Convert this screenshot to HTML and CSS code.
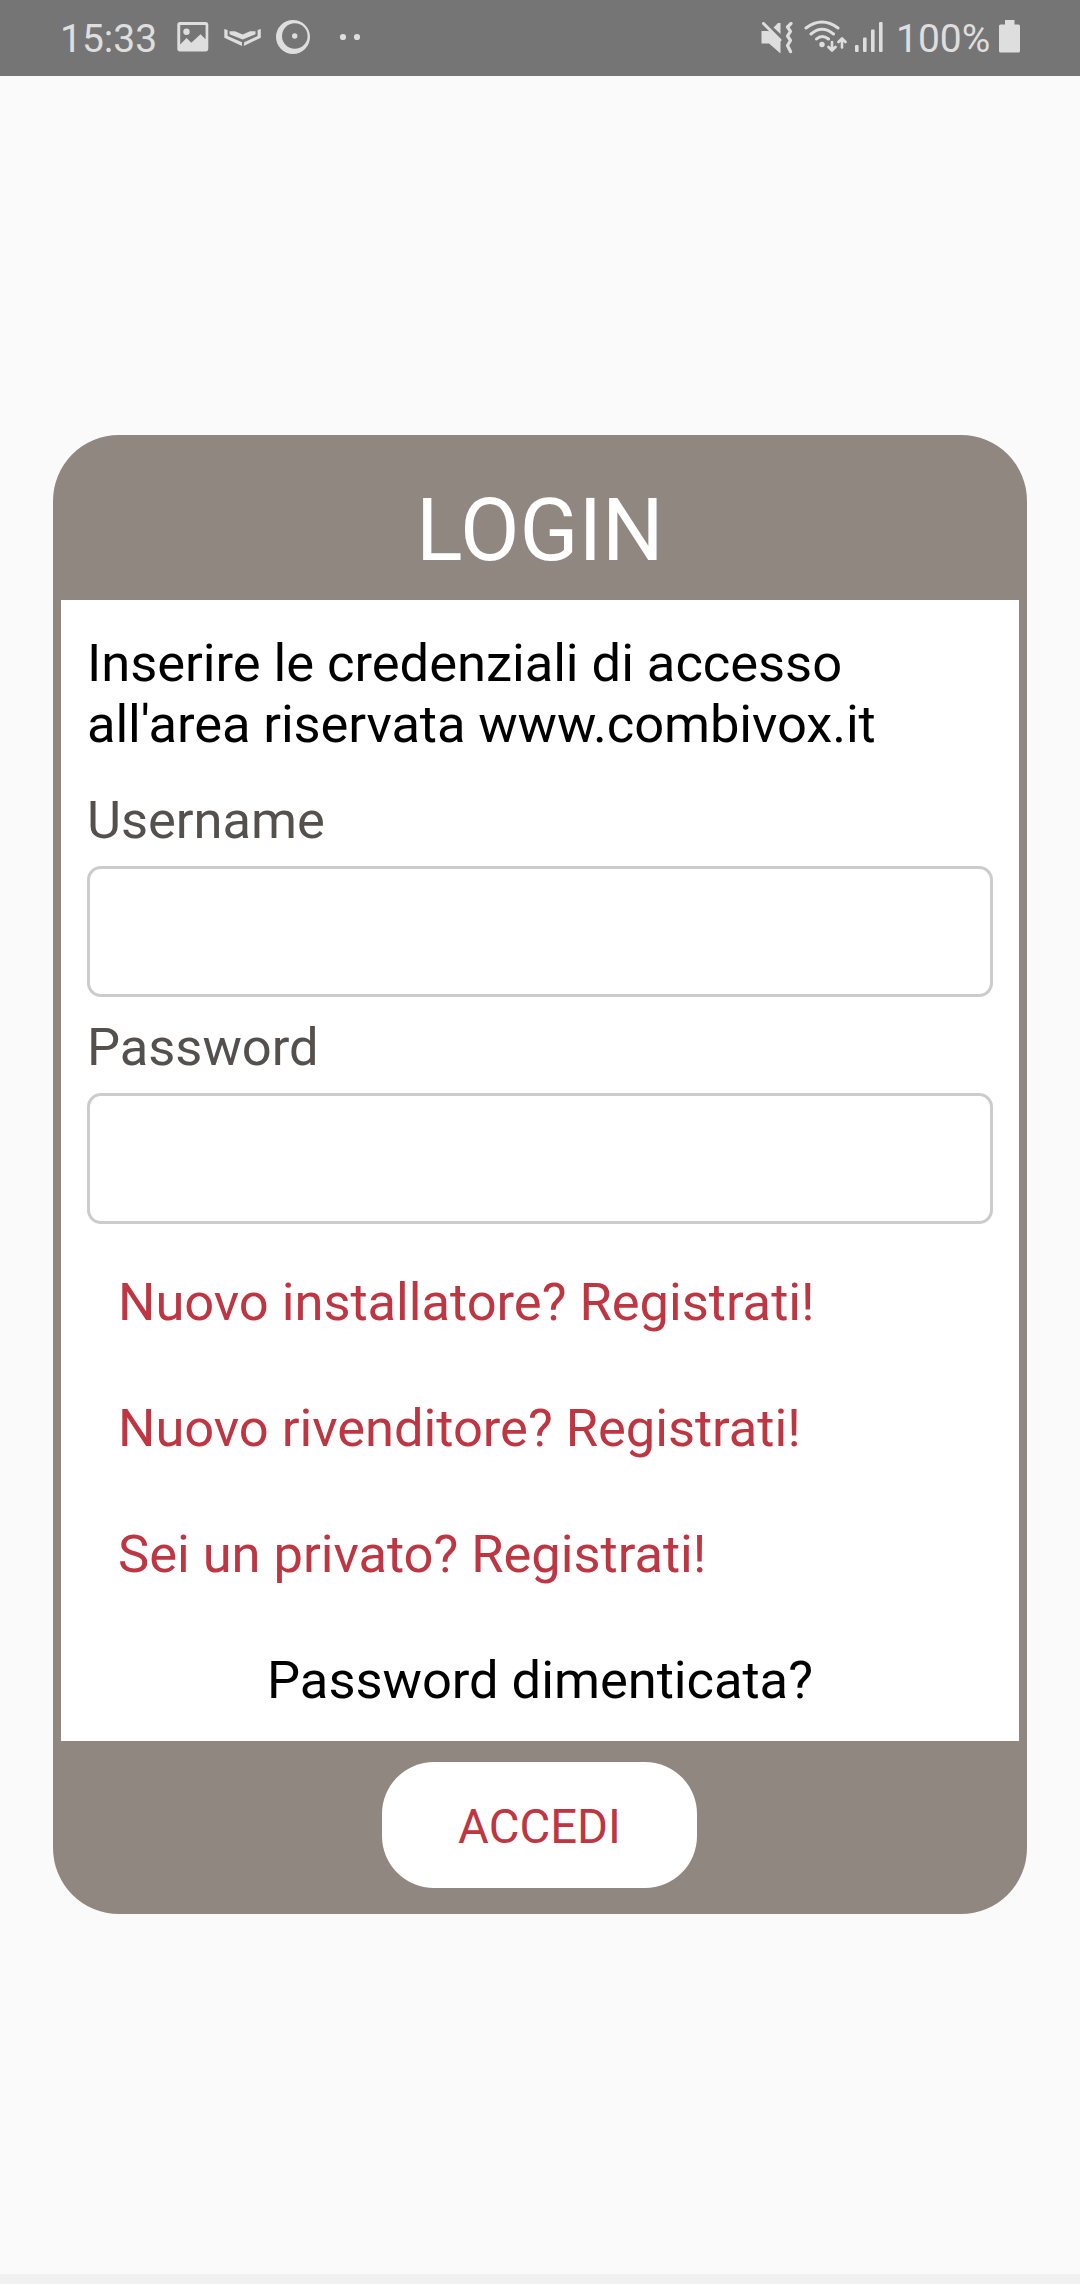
FILE: index.html
```html
<!DOCTYPE html>
<html lang="it">
<head>
<meta charset="utf-8">
<title>Login</title>
<link rel="stylesheet" href="styles.css">
</head>
<body>
<div class="screen">
  <header class="status">
    <div class="status-group">
      <span class="status-text clock">15:33</span>
      <svg class="icon picture" width="32" height="30" viewBox="0 0 32 30"><path fill-rule="evenodd" d="M3 0H28.500Q31.300 0 31.300 3V26.500Q31.300 29.500 28.500 29.500H3Q0.300 29.500 0.300 26.500V3Q0.300 0 3 0ZM3.200 3V22.500L9.600 16L14.300 20.700L23.500 12.200L28.600 17.300V3Z"/><circle cx="9.500" cy="9.800" r="3.200"/></svg>
      <svg class="icon wings" width="38" height="18" viewBox="0 0 38 18"><path d="M.3 0L3.600 1V7L18 13.300V17L.3 8.800ZM36.800 0L33.600 1V7L20.200 13.300L19.800 17L36.800 8.800ZM5.500 2.200H11L18.700 5.500L26 2.200H31.500V5.200L18.700 10.600L5.500 5.200Z"/></svg>
      <svg class="icon ring" width="35" height="35" viewBox="0 0 35 35"><path fill-rule="evenodd" d="M17 0A17 17 0 1 1 17 34A17 17 0 1 1 17 0ZM18.800 3.200A12.800 12.800 0 1 0 18.800 28.800A12.800 12.800 0 1 0 18.800 3.200Z"/><circle cx="18.700" cy="16" r="2.700"/></svg>
      <svg class="icon dots" width="22" height="8" viewBox="0 0 22 8"><circle cx="4" cy="4" r="3.100"/><circle cx="18" cy="4" r="3.100"/></svg>
    </div>
    <div class="status-group">
      <svg class="icon mute" width="32" height="32" viewBox="0 0 32 32"><path d="M.5 9H7L9.500 9.500L19.500 19V31.500L8 21.500H.5ZM12.500 5.500L17 1H19.500V12Z"/><path class="line" d="M2.500 1.500L19 18" stroke-width="3"/><path class="line" d="M30 1.500L26.500 5L29.500 9.300L26.500 14L29.500 18.500L26.500 23.500L29.500 29.500" stroke-width="3.200"/></svg>
      <svg class="icon wifi" width="43" height="33" viewBox="0 0 43 33"><path class="line" d="M2 8Q18 -4 34 8M7 14Q18 4.500 29.500 14M12.500 19Q18 14 24.500 19" stroke-width="3"/><circle cx="18" cy="24.500" r="2.700"/><path class="line" d="M28 22V30M24.500 27L28 30.500L31.500 27M38 27.500V18.500M34.500 22L38 18.500L41.500 22" stroke-width="2.600"/></svg>
      <svg class="icon signal" width="28" height="31" viewBox="0 0 28 31"><rect y="23" width="3.600" height="7" rx="1"/><rect x="8" y="15.500" width="3.600" height="14.500" rx="1"/><rect x="16" y="7.500" width="3.600" height="22.500" rx="1"/><rect x="24" width="3.600" height="30" rx="1"/></svg>
      <span class="status-text percent">100%</span>
      <svg class="icon battery" width="21" height="33" viewBox="0 0 21 33"><path d="M6 0H15.500V4.500H19.500Q21 4.500 21 6V31Q21 32.500 19.500 32.500H1.500Q0 32.500 0 31V6Q0 4.500 1.500 4.500H6Z"/></svg>
    </div>
  </header>
  <main class="content">
    <form class="card">
      <h1 class="title">LOGIN</h1>
      <div class="panel">
        <p class="intro">Inserire le credenziali di accesso<br><span class="intro-site">all'area riservata www.combivox.it</span></p>
        <label class="label" for="user">Username</label>
        <input class="field" id="user" type="text">
        <label class="label label-next" for="pass">Password</label>
        <input class="field" id="pass" type="password">
        <nav class="links">
          <a class="link">Nuovo installatore? Registrati!</a>
          <a class="link">Nuovo rivenditore? Registrati!</a>
          <a class="link">Sei un privato? Registrati!</a>
          <a class="link forgot">Password dimenticata?</a>
        </nav>
      </div>
      <div class="actions"><button class="submit" type="button">ACCEDI</button></div>
    </form>
  </main>
  <div class="navbar"></div>
</div>
</body>
</html>
```
FILE: styles.css
```css
* { box-sizing: border-box; }
body { margin: 0; background: #fafafa; font-family: Roboto, "Liberation Sans", sans-serif; }
.screen { width: 1080px; height: 2284px; display: flex; flex-direction: column; }
.status { height: 76px; padding: 0 60px; display: flex; justify-content: space-between; background: #757575; color: #dedede; }
.status-group { display: flex; align-items: flex-start; }
.status-text { font-size: 39px; line-height: 46px; margin-top: 16px; }
.clock { width: 97px; }
.icon { display: block; flex: none; fill: #dedede; }
.line { fill: none; stroke: #dedede; stroke-linecap: round; stroke-linejoin: round; }
.picture { margin: 22px 0 0 20px; }
.wings { margin: 29px 0 0 15px; }
.ring { margin: 20px 0 0 14px; }
.dots { margin: 33px 0 0 28px; }
.mute { margin-top: 22px; }
.wifi { margin: 20px 0 0 11px; }
.signal { margin: 22px 0 0 8px; }
.percent { margin-left: 13px; width: 95px; }
.battery { margin: 20px 0 0 8px; }
.content { flex: 1; padding: 359px 53px 0; }
.card { background: #908780; border-radius: 66px; height: 1479px; padding: 0 8px; }
.title { margin: 0; height: 165px; padding-top: 45px; text-align: center; color: #fff; font-size: 86.600px; line-height: 101px; font-weight: 400; }
.panel { height: 1141px; padding: 33px 26px 0; background: #fff; font-size: 52.500px; line-height: 61px; letter-spacing: -0.040px; }
.intro { margin: 0 0 35px; color: #000; }
.intro-site { letter-spacing: -0.110px; }
.label { display: block; margin-bottom: 15px; color: #54504d; }
.label-next { margin-top: 20px; }
.field { display: block; width: 100%; height: 131px; border: 3px solid #ccc; border-radius: 14px; background: #fff; padding: 0 20px; font: inherit; outline: 0; }
.links { margin-top: 15px; display: flex; flex-direction: column; }
.link { padding: 33px 31px 32px; color: #bd3642; }
.forgot { padding-bottom: 30px; text-align: center; color: #000; }
.actions { display: flex; justify-content: center; padding-top: 21px; }
.submit { width: 315px; height: 126px; margin-right: 1px; border: 0; border-radius: 52px; padding: 4px 0 0; background: #fff; color: #bd3642; font-family: inherit; font-size: 47.250px; line-height: 56px; }
.navbar { height: 10px; background: #f1f1f1; }
```
